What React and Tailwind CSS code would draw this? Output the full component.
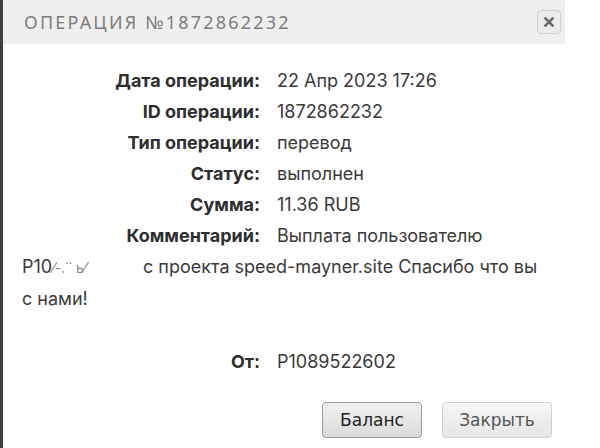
const rows = [
  ["Дата операции:", "22 Апр 2023 17:26"],
  ["ID операции:", "1872862232"],
  ["Тип операции:", "перевод"],
  ["Статус:", "выполнен"],
  ["Сумма:", "11.36 RUB"],
];

function Row({ label, value, className = "" }) {
  return (
    <div className={"flex " + className}>
      <div className="w-[257px] text-right font-bold text-[#2e2e2e]">{label}</div>
      <div className="pl-[17px] text-[#3a3a3a]">{value}</div>
    </div>
  );
}

export default function App() {
  return (
    <div className="w-[600px] h-[448px] bg-white flex overflow-hidden">
      <div className="w-[3px] h-full bg-[#3b4148] shrink-0" />
      <div className="w-[562px] flex flex-col">
        <div className="h-[44px] bg-[#efefef] flex items-center justify-between pl-[21px] pr-[4px]">
          <div className="font-['Noto_Sans',sans-serif] text-[18px] tracking-[2.2px] text-[#7d7d7d]">
            ОПЕРАЦИЯ №1872862232
          </div>
          <div className="w-[24px] h-[24px] rounded-[4px] border border-[#cfcfcf] bg-[#ececec] flex items-center justify-center">
            <svg width="10" height="10" viewBox="0 0 10 10">
              <path d="M1.5 1.5 L8.5 8.5 M8.5 1.5 L1.5 8.5" stroke="#6b6b6b" strokeWidth="2.6" strokeLinecap="square" />
            </svg>
          </div>
        </div>
        <div className="pt-[21px] font-['Inter',sans-serif] text-[18px] leading-[31px] text-[#333]">
          {rows.map(([l, v]) => (
            <Row key={l} label={l} value={v} />
          ))}
          <div className="pl-[19px] text-[#3a3a3a]">
            <span className="inline-block w-[238px] text-right font-bold text-[#2e2e2e]">Комментарий:</span>
            <span className="pl-[17px]">Выплата пользователю</span>
            <br />
            <span className="inline-block w-[121px] whitespace-nowrap">
              P10<span className="text-[14px] text-[#8a8a8a]">⁄-.˙˙ ь⁄</span>
            </span>
            <span>с проекта speed-mayner.site Спасибо что вы</span>
            <br />
            <span>с нами!</span>
          </div>
          <Row label="От:" value="P1089522602" className="mt-[32px]" />
          <div className="flex justify-end gap-[20px] pr-[13px] mt-[25px] font-['DejaVu_Sans',sans-serif] text-[17px]">
            <button className="w-[100px] h-[36px] rounded-[4px] border border-[#9c9c9c] bg-gradient-to-b from-[#f3f3f3] to-[#dadada] text-[#222]">
              Баланс
            </button>
            <button className="w-[110px] h-[36px] rounded-[4px] border border-[#d0d0d0] bg-gradient-to-b from-[#f6f6f6] to-[#e6e6e6] text-[#555]">
              Закрыть
            </button>
          </div>
        </div>
      </div>
    </div>
  );
}
